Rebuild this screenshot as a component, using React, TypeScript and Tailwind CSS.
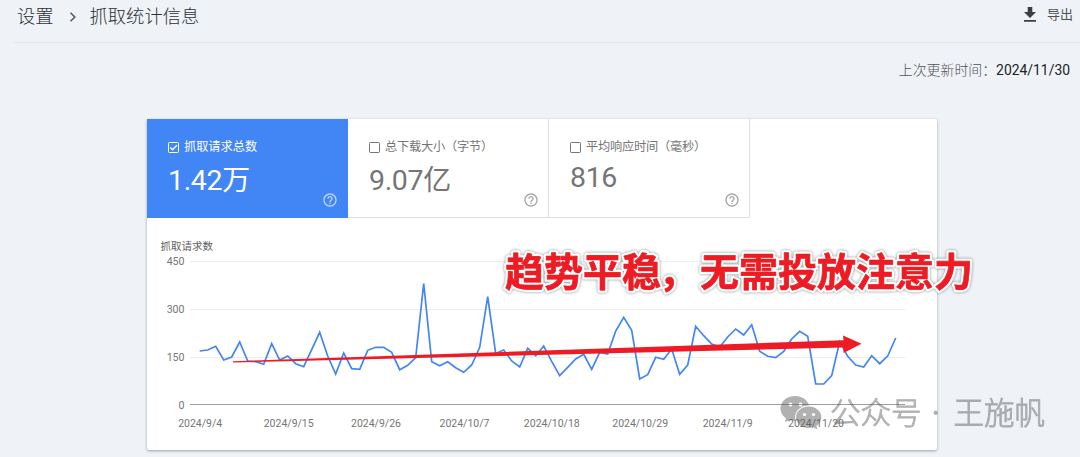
import React from "react";

const values = [
  351, 350, 346.3, 360, 357, 342, 361, 361.7, 364.3, 343.7, 360, 356, 363.7, 366.7, 349.7, 332.3, 356, 374, 353, 368.7,
  369.3, 350.3, 347.3, 347.3, 352.3, 369.7, 365.3, 357.7, 283.5, 361.7, 365.7, 361.7, 367.7, 372.3, 365, 347.3, 296.7,
  353.5, 350, 361, 367, 348.3, 355.7, 346, 361.3, 375.7, 367.3, 359, 354.3, 369.3, 352.3, 354, 331, 317.3, 330.3, 379,
  374.7, 357.3, 359.3, 349, 374.3, 365, 326.3, 335.7, 344, 347, 337, 329, 335, 324.7, 351.3, 356.3, 357.7, 351.3, 339,
  331.3, 336.3, 384, 384, 375.7, 341.7, 356.3, 365, 367, 355.7, 363.7, 356, 338,
];

const line = values.map((y, i) => `${199.7 + i * 8},${y}`).join(" ");

const dates: [number, string][] = [
  [200.2, "2024/9/4"],
  [288.7, "2024/9/15"],
  [376, "2024/9/26"],
  [464.5, "2024/10/7"],
  [551.8, "2024/10/18"],
  [640.2, "2024/10/29"],
  [727.7, "2024/11/9"],
  [816, "2024/11/20"],
];

const levels: [number, string][] = [
  [261, "450"],
  [309, "300"],
  [357, "150"],
];

function HelpIcon() {
  return (
    <svg className="h-4 w-4" viewBox="0 0 24 24" fill="currentColor">
      <path d="M11 18h2v-2h-2v2zm1-16C6.480 2 2 6.480 2 12s4.480 10 10 10 10-4.480 10-10S17.520 2 12 2zm0 18c-4.410 0-8-3.590-8-8s3.590-8 8-8 8 3.590 8 8-3.590 8-8 8zm0-14c-2.210 0-4 1.790-4 4h2c0-1.100.9-2 2-2s2 .9 2 2c0 2-3 1.750-3 5h2c0-2.250 3-2.500 3-5 0-2.210-1.790-4-4-4z" />
    </svg>
  );
}

function Metric({ label, value, unit, active }: { label: string; value: string; unit?: string; active?: boolean }) {
  return (
    <div
      className={
        active
          ? "flex h-[99px] w-[201px] flex-col border-r border-b border-[#4285f4] bg-[#4285f4] pl-[21px] pt-5 text-white"
          : "flex h-[99px] w-[201px] flex-col border-r border-b border-[#e0e0e0] pl-[21px] pt-5 text-[#757575]"
      }
    >
      <div className="flex h-4 items-center gap-[5px] text-[12.200px] leading-4">
        <svg className="mt-px h-[11px] w-[11px]" viewBox="0 0 11 11" fill="none" stroke="currentColor">
          <rect x="0.5" y="0.5" width="10" height="10" rx="0.8" />
          {active && <path d="M2.300 5.500L4.500 7.700L8.900 3.200" strokeWidth="1.400" />}
        </svg>
        <span className={active ? "whitespace-nowrap" : "whitespace-nowrap tracking-[-0.18px]"}>{label}</span>
      </div>
      <div className={unit ? "mt-[10px] flex h-8 items-baseline text-[28.500px] leading-8 tracking-[-0.35px]" : "mt-[7px] h-8 text-[28.500px] leading-8 tracking-[-0.35px]"}>
        {value}
        {unit && <span className="text-[28px] leading-8">{unit}</span>}
      </div>
      <div className={unit ? "-mt-[5px] flex justify-end pr-[9px] opacity-65" : "-mt-[2px] flex justify-end pr-[9px] opacity-65"}>
        <HelpIcon />
      </div>
    </div>
  );
}

export default function App() {
  return (
    <div className="relative h-[457px] w-[1080px] overflow-hidden bg-[#eff3f8] font-['Roboto','Noto_Sans_CJK_SC',sans-serif]">
      <header className="ml-[14px] flex h-[43px] items-start justify-between border-b border-[#e3e6e9] pl-[3px] pr-[7px]">
        <nav className="flex h-[33px] items-center text-[18.300px] font-light leading-8 text-[#2c3033]">
          <span>设置</span>
          <svg className="ml-[15px] mr-[13px] h-[10px] w-[8px]" viewBox="0 0 8 10" fill="none" stroke="#5a5d60" strokeWidth="1.600">
            <path d="M1.500 0.800L5.800 5L1.500 9.200" />
          </svg>
          <span>抓取统计信息</span>
        </nav>
        <button className="flex h-[30px] items-center gap-[11px] text-[13px] text-[#505356]">
          <svg className="-mt-px h-[15px] w-[12px]" viewBox="0 0 12 15" fill="#3c3f42">
            <path d="M3.700 0h4.600v5H12l-6 6-6-6h3.700zM0 12.900h12v1.800H0z" />
          </svg>
          <span>导出</span>
        </button>
      </header>
      <div className="flex h-[76px] justify-end pr-[10px] pt-[17px] text-[13.900px] leading-5">
        <span className="font-light text-[#4f5357]">上次更新时间：</span>
        <span className="text-[13.900px] text-[#202124]">2024/11/30</span>
      </div>
      <main className="ml-[147px] h-[331px] w-[790px] rounded-[2px] bg-white shadow-[0_1px_3px_rgba(0,0,0,0.35)]">
        <section className="flex">
          <Metric active label="抓取请求总数" value="1.42" unit="万" />
          <Metric label="总下载大小（字节）" value="9.07" unit="亿" />
          <Metric label="平均响应时间（毫秒）" value="816" />
        </section>
        <svg className="block h-[232px] w-[790px]" viewBox="147 218 790 232">
          <text x="160.500" y="250" fontSize="10.500" fill="#616161">抓取请求数</text>
          {levels.map(([y, label]) => (
            <g key={label}>
              <path d={`M190 ${y + 0.5}H905`} stroke="#ededed" />
              <text x="184.500" y={y + 4} textAnchor="end" fontSize="10.600" fill="#757575">{label}</text>
            </g>
          ))}
          <text x="184.500" y="409" textAnchor="end" fontSize="10.600" fill="#757575">0</text>
          <path d="M190 404.500H905" stroke="#9e9e9e" />
          {dates.map(([x, label]) => (
            <text key={label} x={x} y="427" textAnchor="middle" fontSize="10.500" fill="#757575">{label}</text>
          ))}
          <polyline points={line} fill="none" stroke="#4285f4" strokeWidth="1.700" />
          <path d="M233 361.200L843.500 340.200L843 335.500L861.500 343.700L843.500 353L843.500 347.400L233 362.600Z" fill="#ed1c24" />
        </svg>
      </main>
      <svg className="pointer-events-none absolute left-[495px] top-[240px] h-[62px] w-[495px] drop-shadow-[0_0_1.5px_rgba(0,0,0,0.45)]" viewBox="495 240 495 62">
        <g fontSize="39" fontWeight="700" strokeLinejoin="round">
          <text x="505" y="285.500" fill="none" stroke="#fff" strokeWidth="5">
            趋势平稳<tspan x="658.500">，</tspan><tspan x="700">无需投放注意力</tspan>
          </text>
          <text x="505" y="285.500" fill="#ed1c24" stroke="#ed1c24" strokeWidth="0.700" aria-hidden="true">
            趋势平稳<tspan x="658.500">，</tspan><tspan x="700">无需投放注意力</tspan>
          </text>
        </g>
      </svg>
      <svg className="pointer-events-none absolute left-[770px] top-[385px] h-[60px] w-[300px] opacity-45" viewBox="770 385 300 60">
        <defs>
          <mask id="bubbles" maskUnits="userSpaceOnUse" x="770" y="385" width="300" height="60">
            <rect x="770" y="385" width="300" height="60" fill="#fff" />
            <ellipse cx="808.500" cy="417.300" rx="13.500" ry="11.700" fill="#000" />
            <circle cx="790.500" cy="404.500" r="1.900" fill="#000" />
            <circle cx="800.500" cy="404.500" r="1.900" fill="#000" />
          </mask>
          <mask id="eyes" maskUnits="userSpaceOnUse" x="770" y="385" width="300" height="60">
            <rect x="770" y="385" width="300" height="60" fill="#fff" />
            <circle cx="804.500" cy="414.500" r="1.600" fill="#000" />
            <circle cx="813.500" cy="414.500" r="1.600" fill="#000" />
          </mask>
        </defs>
        <path mask="url(#bubbles)" d="M795 396c-8.200 0-14.500 5.300-14.500 12.500 0 4 2 7.500 5.500 9.800l-1.300 4 5-2.400c2 .6 3.600.8 5.300.8 8 0 14.500-5.200 14.500-12.200S803 396 795 396Z" fill="#555" />
        <path mask="url(#eyes)" d="M808.700 406.500c-7 0-12.700 4.800-12.700 10.700S801.700 428 808.700 428c1.500 0 3-.3 4.500-.8l4.300 2.400-1.100-3.700c3-2.100 5-5.200 5-8.700 0-5.900-5.700-10.700-12.700-10.700Z" fill="#555" />
        <g fontSize="30.500" fontWeight="300" fill="#555" stroke="#555" strokeWidth="0.900">
          <text x="830" y="424">公众号</text>
          <text x="935.700" y="424" textAnchor="middle" strokeWidth="1.800" className="font-['Roboto',sans-serif]">·</text>
          <text x="953.500" y="424">王施帆</text>
        </g>
      </svg>
    </div>
  );
}
